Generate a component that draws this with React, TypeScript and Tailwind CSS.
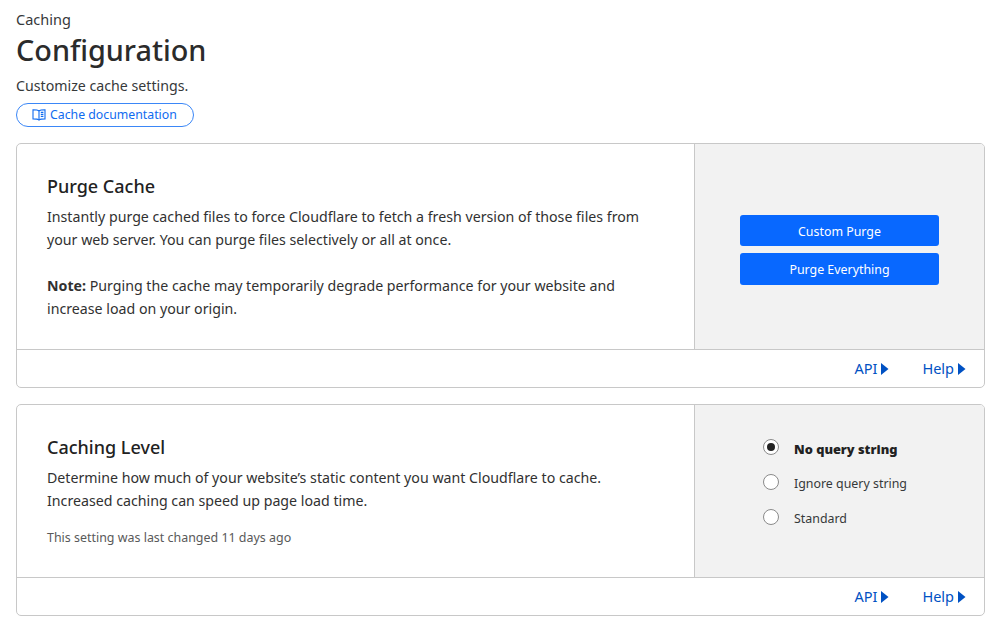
const font = "font-['Noto_Sans','Open_Sans',sans-serif]";

function BookIcon() {
  return (
    <svg width="14" height="12" viewBox="0 0 14 12" fill="none" stroke="#0f6bf0" strokeWidth="1.1">
      <path d="M7 1.8C6 1 4 .7 1 .7v9.2c3 0 5 .3 6 1.2 1-.9 3-1.2 6-1.2V.7C10 .7 8 1 7 1.8z" />
      <path d="M7 1.8v9.3M8.8 3.4h2.6M8.8 5.4h2.6M8.8 7.4h2.6" />
    </svg>
  );
}

function Arrow() {
  return (
    <svg width="8" height="12" viewBox="0 0 8 12" className="ml-[4px]">
      <path d="M0 0l7.5 6L0 12z" fill="#0051c3" />
    </svg>
  );
}

function CardFooter() {
  return (
    <div className="h-[37px] flex items-center justify-end gap-[33px] pr-[18px] text-[#0051c3] text-[14.5px]">
      <a className="flex items-center">API<Arrow /></a>
      <a className="flex items-center">Help<Arrow /></a>
    </div>
  );
}

function Radio({ label, checked }: { label: string; checked?: boolean }) {
  return (
    <div className="flex items-center h-[35px]">
      <span className="w-[16px] h-[16px] rounded-full border border-[#8a8a8a] bg-white flex items-center justify-center mr-[15px] -mt-[3px]">
        {checked && <span className="w-[8px] h-[8px] rounded-full bg-[#222]" />}
      </span>
      <span className={checked ? "pt-[2px] text-[12.8px] font-black text-[#222]" : "pt-[2px] text-[12.4px] text-[#36393a]"}>{label}</span>
    </div>
  );
}

export default function App() {
  return (
    <div className={`${font} w-[1000px] h-[629px] overflow-hidden bg-white text-[#313131] px-[16px] pt-[9px]`}>
      <div className="text-[14.5px] leading-[20px] text-[#36393a]">Caching</div>
      <h1 className="text-[28.8px] leading-[42px] font-medium text-[#2b2b2b]">Configuration</h1>
      <p className="text-[14.2px] leading-[20px] mt-[5px] text-[#36393a]">Customize cache settings.</p>
      <a className="mt-[7px] w-[178px] h-[24px] rounded-full border border-[#3b87f7] flex items-center pl-[15px] gap-[4px] text-[12.3px] text-[#0f6bf0]">
        <BookIcon />
        Cache documentation
      </a>

      <section className="mt-[16px] w-[969px] border border-[#c8c8c8] rounded-[5px] overflow-hidden">
        <div className="flex h-[206px] border-b border-[#c8c8c8]">
          <div className="w-[678px] pl-[30px] pt-[30px] border-r border-[#c8c8c8]">
            <h2 className="text-[18px] leading-[25px] font-medium text-[#222]">Purge Cache</h2>
            <p className="text-[14.2px] leading-[23px] mt-[6px] text-[#313131]">
              Instantly purge cached files to force Cloudflare to fetch a fresh version of those files from
              <br />
              your web server. You can purge files selectively or all at once.
            </p>
            <p className="text-[14.2px] leading-[23px] mt-[23px] text-[#313131]">
              <b className="font-bold">Note:</b> Purging the cache may temporarily degrade performance for your website and
              <br />
              increase load on your origin.
            </p>
          </div>
          <div className="flex-1 bg-[#f2f2f2] flex flex-col items-center pt-[71px] gap-[7px]">
            <button className="w-[199px] h-[31px] pt-[3px] rounded-[3px] bg-[#0868ff] text-white text-[12.4px]">Custom Purge</button>
            <button className="w-[199px] h-[32px] pt-[3px] rounded-[3px] bg-[#0868ff] text-white text-[12.4px]">Purge Everything</button>
          </div>
        </div>
        <CardFooter />
      </section>

      <section className="mt-[16px] w-[969px] border border-[#c8c8c8] rounded-[5px] overflow-hidden">
        <div className="flex h-[173px] border-b border-[#c8c8c8]">
          <div className="w-[678px] pl-[30px] pt-[30px] border-r border-[#c8c8c8]">
            <h2 className="text-[18px] leading-[25px] font-medium text-[#222]">Caching Level</h2>
            <p className="text-[14.2px] leading-[23px] mt-[6px] text-[#313131]">
              Determine how much of your website’s static content you want Cloudflare to cache.
              <br />
              Increased caching can speed up page load time.
            </p>
            <p className="text-[12.45px] leading-[18px] mt-[17px] text-[#595959]">This setting was last changed 11 days ago</p>
          </div>
          <div className="flex-1 bg-[#f2f2f2] pl-[68px] pt-[26px]">
            <Radio label="No query string" checked />
            <Radio label="Ignore query string" />
            <Radio label="Standard" />
          </div>
        </div>
        <CardFooter />
      </section>
    </div>
  );
}
